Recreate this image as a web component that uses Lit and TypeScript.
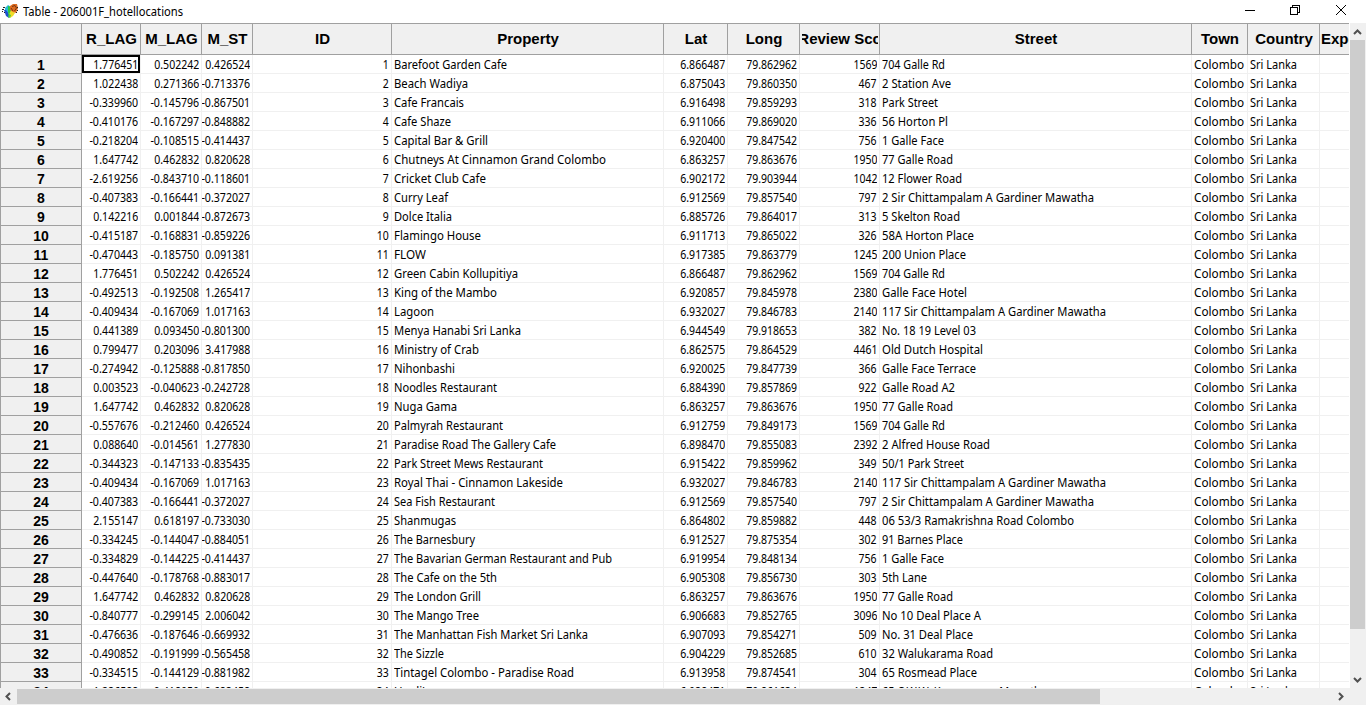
import { LitElement, html, svg, css } from "lit";
import { customElement } from "lit/decorators.js";

const ctx = document.createElement("canvas").getContext("2d")!;
function widthOf(text: string): number {
  ctx.font = '12px "Noto Sans"';
  return ctx.measureText(text).width;
}

type Kind = "num" | "num tight" | "text";
const columns: { name: string; width: number; kind: Kind }[] = [
  { name: "R_LAG", width: 59, kind: "num" },
  { name: "M_LAG", width: 61, kind: "num" },
  { name: "M_ST", width: 51, kind: "num tight" },
  { name: "ID", width: 139, kind: "num" },
  { name: "Property", width: 272, kind: "text" },
  { name: "Lat", width: 64, kind: "num" },
  { name: "Long", width: 72, kind: "num" },
  { name: "Review Sco", width: 80, kind: "num" },
  { name: "Street", width: 312, kind: "text" },
  { name: "Town", width: 56, kind: "text" },
  { name: "Country", width: 72, kind: "text" },
  { name: "Expensive", width: 72, kind: "text" },
];

// r_lag | m_lag | m_st | property | its width | lat | long | score | street | its width
const data = `1.776451|0.502242|0.426524|Barefoot Garden Cafe|113|6.866487|79.862962|1569|704 Galle Rd|63
1.022438|0.271366|-0.713376|Beach Wadiya|74|6.875043|79.860350|467|2 Station Ave|69
-0.339960|-0.145796|-0.867501|Cafe Francais|70|6.916498|79.859293|318|Park Street|56
-0.410176|-0.167297|-0.848882|Cafe Shaze|57|6.911066|79.869020|336|56 Horton Pl|66
-0.218204|-0.108515|-0.414437|Capital Bar & Grill|94|6.920400|79.847542|756|1 Galle Face|62
1.647742|0.462832|0.820628|Chutneys At Cinnamon Grand Colombo|212|6.863257|79.863676|1950|77 Galle Road|71
-2.619256|-0.843710|-0.118601|Cricket Club Cafe|92|6.902172|79.903944|1042|12 Flower Road|80
-0.407383|-0.166441|-0.372027|Curry Leaf|54|6.912569|79.857540|797|2 Sir Chittampalam A Gardiner Mawatha|212
0.142216|0.001844|-0.872673|Dolce Italia|58|6.885726|79.864017|313|5 Skelton Road|78
-0.415187|-0.168831|-0.859226|Flamingo House|87|6.911713|79.865022|326|58A Horton Place|92
-0.470443|-0.185750|0.091381|FLOW|32|6.917385|79.863779|1245|200 Union Place|84
1.776451|0.502242|0.426524|Green Cabin Kollupitiya|124|6.866487|79.862962|1569|704 Galle Rd|63
-0.492513|-0.192508|1.265417|King of the Mambo|103|6.920857|79.845978|2380|Galle Face Hotel|85
-0.409434|-0.167069|1.017163|Lagoon|40|6.932027|79.846783|2140|117 Sir Chittampalam A Gardiner Mawatha|224
0.441389|0.093450|-0.801300|Menya Hanabi Sri Lanka|127|6.944549|79.918653|382|No. 18 19 Level 03|94
0.799477|0.203096|3.417988|Ministry of Crab|85|6.862575|79.864529|4461|Old Dutch Hospital|101
-0.274942|-0.125888|-0.817850|Nihonbashi|61|6.920025|79.847739|366|Galle Face Terrace|94
0.003523|-0.040623|-0.242728|Noodles Restaurant|103|6.884390|79.857869|922|Galle Road A2|73
1.647742|0.462832|0.820628|Nuga Gama|63|6.863257|79.863676|1950|77 Galle Road|71
-0.557676|-0.212460|0.426524|Palmyrah Restaurant|109|6.912759|79.849173|1569|704 Galle Rd|63
0.088640|-0.014561|1.277830|Paradise Road The Gallery Cafe|162|6.898470|79.855083|2392|2 Alfred House Road|108
-0.344323|-0.147133|-0.835435|Park Street Mews Restaurant|149|6.915422|79.859962|349|50/1 Park Street|82
-0.409434|-0.167069|1.017163|Royal Thai - Cinnamon Lakeside|169|6.932027|79.846783|2140|117 Sir Chittampalam A Gardiner Mawatha|224
-0.407383|-0.166441|-0.372027|Sea Fish Restaurant|101|6.912569|79.857540|797|2 Sir Chittampalam A Gardiner Mawatha|212
2.155147|0.618197|-0.733030|Shanmugas|62|6.864802|79.859882|448|06 53/3 Ramakrishna Road Colombo|192
-0.334245|-0.144047|-0.884051|The Barnesbury|81|6.912527|79.875354|302|91 Barnes Place|81
-0.334829|-0.144225|-0.414437|The Bavarian German Restaurant and Pub|218|6.919954|79.848134|756|1 Galle Face|62
-0.447640|-0.178768|-0.883017|The Cafe on the 5th|103|6.905308|79.856730|303|5th Lane|45
1.647742|0.462832|0.820628|The London Grill|87|6.863257|79.863676|1950|77 Galle Road|71
-0.840777|-0.299145|2.006042|The Mango Tree|85|6.906683|79.852765|3096|No 10 Deal Place A|99
-0.476636|-0.187646|-0.669932|The Manhattan Fish Market Sri Lanka|194|6.907093|79.854271|509|No. 31 Deal Place|91
-0.490852|-0.191999|-0.565458|The Sizzle|50|6.904229|79.852685|610|32 Walukarama Road|111
-0.334515|-0.144129|-0.881982|Tintagel Colombo - Paradise Road|180|6.913958|79.874541|304|65 Rosmead Place|95
1.236588|-0.418959|-0.683458|Upali's|36|6.938471|79.861634|1347|65 C.W.W. Kannangara Mawatha|165`
  .split("\n")
  .map((line) => line.split("|"));

function fit(text: string, target: number) {
  return html`<span class="fit" style="transform:scaleX(${(target / widthOf(text)).toFixed(4)})">${text}</span>`;
}

function numberWidth(text: string): number {
  return [...text].reduce((sum, c) => sum + (c === "." ? 3 : c === "-" ? 3.7 : 6), 0);
}

@customElement("app-root")
export class AppRoot extends LitElement {
  static styles = css`
    :host { display: block; }
    .window {
      display: flex; flex-direction: column; width: 1366px; height: 705px;
      overflow: hidden; background: #fff; color: #000;
      font: 12px/18px "Noto Sans", sans-serif;
    }
    .title { display: flex; height: 23px; flex: none; align-items: center; }
    .logo { width: 18px; height: 18px; margin: 0 4px 1px 1px; }
    .caption { flex: 1; height: 22px; line-height: 22px; }
    .controls { width: 126px; height: 23px; }
    .main { display: flex; height: 665px; flex: none; }
    .grid { width: 1349px; overflow: hidden; box-sizing: border-box; border-top: 1px solid #a0a0a0; border-left: 1px solid #a0a0a0; }
    .row { display: flex; height: 19px; width: 1500px; }
    .row.head { height: 31px; }
    .label, .th {
      box-sizing: border-box; flex: none; background: #f0f0f0; text-align: center;
      border-right: 1px solid #a0a0a0; border-bottom: 1px solid #a0a0a0;
    }
    .label { width: 81px; font: bold 14px/19px "Liberation Sans", Arial, sans-serif; padding-top: 1px; overflow: hidden; }
    .th { font: bold 15px/30px "Liberation Sans", Arial, sans-serif; padding: 0 1px 0 2px; }
    .th .clip { display: flex; justify-content: center; overflow: hidden; white-space: nowrap; }
    .th.start { padding-left: 1px; }
    .th.start .clip { justify-content: flex-start; }
    .cell {
      box-sizing: border-box; flex: none; height: 19px;
      border-right: 1px solid #f0f0f0; border-bottom: 1px solid #f0f0f0; padding: 0 1px 0 2px;
    }
    .cell .clip { overflow: hidden; white-space: nowrap; height: 18px; line-height: 20px; }
    .num { padding: 0 2px 0 1px; }
    .num.tight { padding: 0 2px 0 0; }
    .num .clip { display: flex; justify-content: flex-end; }
    .fit { display: inline-block; transform-origin: left center; }
    .num .fit { transform-origin: right center; }
    .active { box-shadow: inset 0 0 0 2px #000; }
    .vbar { width: 16px; height: 665px; margin-left: 1px; background: #f0f0f0; display: flex; flex-direction: column; }
    .vbar .thumb { width: 15px; height: 589px; }
    .thumb { background: #cdcdcd; }
    .hbar { display: flex; height: 17px; background: #f0f0f0; align-items: flex-start; }
    .hbar .thumb { width: 1083px; height: 15px; margin-top: 1px; }
    .space { flex: 1; }
    svg { display: block; flex: none; }
  `;

  private arrow(w: number, h: number, points: string) {
    return html`<svg width=${w} height=${h}>${svg`<polyline points=${points} fill="none" stroke="#505050" stroke-width="2"/>`}</svg>`;
  }

  private cell(index: number, text: string, target: number, active = false) {
    const c = columns[index];
    return html`<div class="cell ${c.kind} ${active ? "active" : ""}" style="width:${c.width}px"><div class="clip">${text ? fit(text, target) : ""}</div></div>`;
  }

  private row(d: string[], i: number) {
    const id = String(i + 1);
    const n = (col: number, v: string) => this.cell(col, v, numberWidth(v), i === 0 && col === 0);
    return html`<div class="row">
      <div class="label">${id}</div>
      ${n(0, d[0])}${n(1, d[1])}${n(2, d[2])}${n(3, id)}
      ${this.cell(4, d[3], +d[4])}${n(5, d[5])}${n(6, d[6])}${n(7, d[7])}
      ${this.cell(8, d[8], +d[9])}${this.cell(9, "Colombo", 50)}${this.cell(10, "Sri Lanka", 47)}${this.cell(11, "", 0)}
    </div>`;
  }

  render() {
    return html`<div class="window">
      <div class="title">
        <svg class="logo" viewBox="0 0 18 18">
          <path d="M4 6l3-3 3 2-2 6-2 1-2-3z" fill="#28b8d8"/>
          <path d="M3 8l2 0 3 4 0 4-3-2z" fill="#1d50d0"/>
          <path d="M7 4l3 1 1 5-3 5-1-5z" fill="#35c840"/>
          <path d="M10 8l4 3-2 3-3 2-1-3z" fill="#f0dc28"/>
          <path d="M8 12l2 1-1 3-2-1z" fill="#4ccc38"/>
          <path d="M9 4l3-2 4 0 1 4-2 5-3-1-3-2z" fill="#dd6c20"/>
          <path d="M11 4.500l3-1 1.500 2.500-2 3M10 6l2 3" fill="none" stroke="#7a3510"/>
          <path d="M1 7.500h2M2 5.500h2M1 9.500h1M3 10.500h1M16 5.500h1M16 8.500h1M15 10.500h1" stroke="#222"/>
        </svg>
        <div class="caption">${fit("Table - 206001F_hotellocations", 160)}</div>
        <svg class="controls" viewBox="0 0 126 23" fill="none" stroke="#000" shape-rendering="crispEdges">
          <path d="M5 10.500h10M50.500 7.500h7v7h-7zM52.500 7.500v-2h7v7h-2"/>
          <path d="M96 5l10 10M106 5L96 15" shape-rendering="auto"/>
        </svg>
      </div>
      <div class="main">
        <div class="grid">
          <div class="row head">
            <div class="label"></div>
            ${columns.map((c, i) => html`<div class="th ${i === 11 ? "start" : ""}" style="width:${c.width}px"><div class="clip">${c.name}</div></div>`)}
          </div>
          ${data.map((d, i) => this.row(d, i))}
        </div>
        <div class="vbar">
          ${this.arrow(16, 17, "4,11 7.500,7.500 11,11")}
          <div class="thumb"></div>
          <div class="space"></div>
          ${this.arrow(16, 17, "4,7 7.500,10.500 11,7")}
        </div>
      </div>
      <div class="hbar">
        ${this.arrow(17, 17, "10,5 6.500,8.500 10,12")}
        <div class="thumb"></div>
        <div class="space"></div>
        ${this.arrow(33, 17, "6,5 9.500,8.500 6,12")}
      </div>
    </div>`;
  }
}
